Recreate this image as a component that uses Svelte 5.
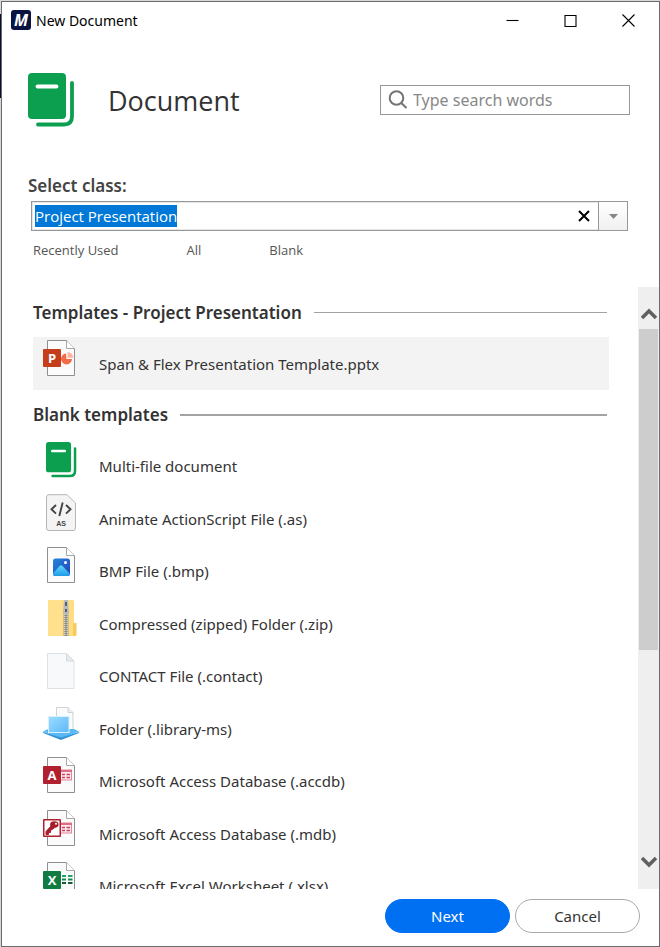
<script>
  import { onMount } from 'svelte';

  let classInput;
  let classValue = $state('Project Presentation');
  let selected = $state('Span & Flex Presentation Template.pptx');

  const templates = [{ icon: 'pptx', name: 'Span & Flex Presentation Template.pptx' }];
  const blanks = [
    { icon: 'book', name: 'Multi-file document' },
    { icon: 'as', name: 'Animate ActionScript File (.as)' },
    { icon: 'bmp', name: 'BMP File (.bmp)' },
    { icon: 'zip', name: 'Compressed (zipped) Folder (.zip)' },
    { icon: 'contact', name: 'CONTACT File (.contact)' },
    { icon: 'library', name: 'Folder (.library-ms)' },
    { icon: 'accdb', name: 'Microsoft Access Database (.accdb)' },
    { icon: 'mdb', name: 'Microsoft Access Database (.mdb)' },
    { icon: 'xlsx', name: 'Microsoft Excel Worksheet (.xlsx)' }
  ];

  onMount(() => {
    classInput.focus();
    classInput.select();
  });

  function clearClass() {
    classValue = '';
    classInput.focus();
  }
</script>

{#snippet book()}
  <rect x="0" y="0" width="38" height="46" rx="4" fill="#0b9f4f" />
  <path d="M9.500 13.500H28.500" stroke="#fff" stroke-width="3.800" stroke-linecap="round" />
  <path d="M44 10V43.500Q44 51.500 36 51.500H10" fill="none" stroke="#0b9f4f" stroke-width="3.800" stroke-linecap="round" />
{/snippet}

{#snippet page()}
  <path d="M5.500 1.500H24.500L32.500 9.500V36.500H5.500Z" fill="#fbfbfb" stroke="#8f8f8f" />
  <path d="M24.500 1.500V9.500H32.500" fill="#fff" stroke="#a8a8a8" />
{/snippet}

{#snippet fileIcon(kind)}
  <svg class="icon" viewBox="0 0 38 38" aria-hidden="true">
    {#if kind === 'book'}
      <g transform="translate(4 1) scale(0.66)">{@render book()}</g>
    {:else if kind === 'as'}
      <path d="M7 .7H25L33.500 9V34Q33.500 36.500 31 36.500H7Q4.500 36.500 4.500 34V3.200Q4.500 .7 7 .7Z" fill="#f4f4f4" stroke="#b5b5b5" />
      <path d="M14 11L9.500 15.300L14 19.600M24 11L28.500 15.300L24 19.600M20.700 8.500L17.300 22" fill="none" stroke="#444" stroke-width="1.900" />
      <text x="19" y="32" text-anchor="middle" class="tiny">AS</text>
    {:else if kind === 'contact'}
      <path d="M5.500 2.500H24.500L32 10V37.500H5.500Z" fill="#f8f9fa" stroke="#dfe2e5" />
      <path d="M24.500 2.500V10H32Z" fill="#e8ebed" stroke="#d5d8dc" />
    {:else if kind === 'zip'}
      <path d="M6 1H30.500Q32 1 32 2.500V24H34V35.500Q34 37 32.500 37H6Z" fill="#ffdd80" />
      <path d="M6 1H20V37H6Z" fill="#ffe08c" />
      <path d="M31 37V26Q31 24 33 24H34.500V35.500Q34.500 37 33 37Z" fill="#f6ca5c" />
      <path d="M24 14V37" stroke="#a7a394" stroke-width="5" />
      <path d="M24 15V37" stroke="#ece9db" stroke-width="3.500" stroke-dasharray="1 1" />
      <path d="M24 15V37" stroke="#77756b" stroke-width="1" />
      <path d="M22 1H26L27 14Q24 17 21 14Z" fill="#b7bac0" />
      <path d="M24 3V7M24 10V13" stroke="#5d6167" stroke-width="2" />
    {:else if kind === 'library'}
      <path d="M14.500 3.500H26L31 8.500V29H14.500Z" fill="#fafbfc" stroke="#cfd3d7" />
      <path d="M26 3.500V8.500H31" fill="#eceff1" stroke="#cfd3d7" />
      <path d="M1 27.500L6 25H32L37 27.500L19 34.500Z" fill="#5ab9f3" />
      <path d="M1 28L19 33.500L37 28V29L19 36L1 29Z" fill="#2f93d8" />
      <rect x="6.500" y="12.500" width="20.500" height="16" fill="url(#sky)" stroke="#dceffc" />
    {:else}
      {@render page()}
      {#if kind === 'bmp'}
        <rect x="11" y="12.500" width="17" height="17.500" rx="2.500" fill="url(#photo)" />
        <path d="M11 27.500L17.500 20Q19 18.500 20.500 20L28 28Q28 30 25.500 30H13.500Q11 30 11 27.500Z" fill="url(#hill)" />
        <circle cx="23.500" cy="16.500" r="1.500" fill="#fff" />
      {:else if kind === 'pptx'}
        <path d="M24 14.500A5.500 5.500 0 1 0 30 20H24.500Z" fill="#f26b48" />
        <path d="M25.500 13V18.800H31.300A5.800 5.800 0 0 0 25.500 13Z" fill="#ffb3a0" />
        <rect x="1" y="10" width="18" height="18" rx="1" fill="#c43e1c" />
        <text x="10" y="24" text-anchor="middle" class="letter">P</text>
      {:else if kind === 'xlsx'}
        <path d="M20 15H24M26 15H30.500" stroke="#21a366" stroke-width="2" />
        <path d="M20 18.500H24M26 18.500H30.500" stroke="#138a50" stroke-width="2" />
        <path d="M20 22H24M26 22H30.500" stroke="#185c37" stroke-width="2" />
        <rect x="1" y="10" width="18" height="18" rx="1" fill="#107c41" />
        <text x="10" y="24" text-anchor="middle" class="letter">X</text>
      {:else}
        <rect x="18" y="14" width="11.500" height="10" fill="#fde9ee" stroke="#e88399" />
        <path d="M18 15H30" stroke="#dc6d86" stroke-width="2" />
        <path d="M20 18.500H23M24.500 18.500H28M20 21.500H23M24.500 21.500H28" stroke="#c8435d" stroke-width="1.300" />
        <rect x="1" y="10" width="18" height="18" rx="1" fill="#b0202f" />
        {#if kind === 'accdb'}
          <text x="10" y="24" text-anchor="middle" class="letter">A</text>
        {:else}
          <rect x="2.500" y="11.500" width="15" height="15" fill="#fff" />
          <ellipse cx="12.300" cy="15.500" rx="4.200" ry="3.300" fill="#a81d2c" />
          <path d="M10 16L4 22.500V25.500H6.500V23.500H8.500V21.500L13.500 18" fill="#a81d2c" stroke="#a81d2c" />
          <circle cx="14" cy="14.800" r="1" fill="#fff" />
        {/if}
      {/if}
    {/if}
  </svg>
{/snippet}

{#snippet rows(items)}
  <ul>
    {#each items as item}
      <li>
        <button type="button" class="row" class:selected={selected === item.name} onclick={() => (selected = item.name)}>
          {@render fileIcon(item.icon)}
          <span>{item.name}</span>
        </button>
      </li>
    {/each}
  </ul>
{/snippet}

<svg class="defs" width="0" height="0" aria-hidden="true">
  <defs>
    <linearGradient id="sky" x1="0" y1="0" x2="1" y2="1"><stop stop-color="#9bdcff" /><stop offset="1" stop-color="#5db9f8" /></linearGradient>
    <linearGradient id="photo" x1="0" y1="0" x2="1" y2="1"><stop stop-color="#1f86dc" /><stop offset="1" stop-color="#2b3fb5" /></linearGradient>
    <linearGradient id="hill" x1="0" y1="0" x2="0" y2="1"><stop stop-color="#5fd8fa" /><stop offset="1" stop-color="#1e9ae8" /></linearGradient>
  </defs>
</svg>

<div class="desktop">
  <main class="window">
    <div class="titlebar">
      <svg class="app" viewBox="0 0 20 20" aria-hidden="true">
        <rect width="20" height="20" rx="3" fill="#0a1440" />
        <text x="10" y="15.500" text-anchor="middle" class="mark">M</text>
      </svg>
      <span class="caption">New Document</span>
      <button type="button" class="win" aria-label="Minimize">
        <svg viewBox="0 0 13 13"><path d="M.5 6.500H12.500" /></svg>
      </button>
      <button type="button" class="win" aria-label="Maximize">
        <svg viewBox="0 0 13 13"><path d="M1 1.500H12V12.500H1Z" /></svg>
      </button>
      <button type="button" class="win" aria-label="Close">
        <svg viewBox="0 0 13 13"><path d="M.5 .5L12.500 12.500M12.500 .5L.5 12.500" /></svg>
      </button>
    </div>

    <header>
      <svg class="hero" viewBox="0 0 48 54" aria-hidden="true">{@render book()}</svg>
      <h1>Document</h1>
      <label class="search">
        <svg viewBox="0 0 20 20" aria-hidden="true"><circle cx="8.500" cy="8" r="6.800" /><path d="M13.300 13L18.500 18" /></svg>
        <input type="search" placeholder="Type search words" aria-label="Search" />
      </label>
    </header>

    <section class="class-picker">
      <label for="class">Select class:</label>
      <div class="combo">
        <input id="class" type="text" autocomplete="off" spellcheck="false" bind:this={classInput} bind:value={classValue} />
        <button type="button" class="clear" aria-label="Clear" onclick={clearClass}>
          <svg viewBox="0 0 12 12"><path d="M1 1L11 11M11 1L1 11" /></svg>
        </button>
        <button type="button" class="drop" aria-label="Show classes">
          <svg viewBox="0 0 9 5"><path d="M0 0H9L4.500 5Z" /></svg>
        </button>
      </div>
      <nav>
        <a href="#recent">Recently Used</a>
        <a href="#all">All</a>
        <a href="#blank">Blank</a>
      </nav>
    </section>

    <div class="browser">
      <div class="list">
        <h2>Templates - Project Presentation</h2>
        {@render rows(templates)}
        <h2 class="strong">Blank templates</h2>
        {@render rows(blanks)}
      </div>
      <div class="scrollbar">
        <button type="button" aria-label="Scroll up">
          <svg viewBox="0 0 16 12"><path d="M1 10L8 3L15 10" /></svg>
        </button>
        <div class="track"><div class="thumb"></div></div>
        <button type="button" aria-label="Scroll down">
          <svg viewBox="0 0 16 12"><path d="M1 2L8 9L15 2" /></svg>
        </button>
      </div>
    </div>

    <footer>
      <button type="button" class="primary">Next</button>
      <button type="button">Cancel</button>
    </footer>
  </main>
</div>

<style>
  :global(body) {
    margin: 0;
  }
  * {
    box-sizing: border-box;
  }
  button,
  input {
    font: inherit;
    color: inherit;
    margin: 0;
    padding: 0;
    border: 0;
    background: none;
    outline: none;
  }
  svg {
    display: block;
    flex: none;
  }
  .defs {
    position: absolute;
  }
  .desktop {
    height: 100vh;
    padding: 1px 0 0 1px;
    background: linear-gradient(#d9d9d9 14px, #060c33 14px, #060c33 98px, #d4d6da 98px);
    font-family: 'Noto Sans', 'Open Sans', sans-serif;
    font-size: 15px;
    color: #333;
  }
  .window {
    display: flex;
    flex-direction: column;
    height: 100%;
    border: 1px solid #6c6c6c;
    background: #fff;
  }
  .titlebar {
    display: flex;
    align-items: center;
    flex: none;
    height: 36px;
    padding: 0 2px 0 9px;
    color: #000;
  }
  .app {
    width: 20px;
    height: 20px;
  }
  .mark {
    font: italic 700 16px 'Open Sans', sans-serif;
    fill: #fff;
  }
  .caption {
    flex: 1;
    padding-left: 5px;
    font-size: 14px;
  }
  .win {
    display: grid;
    place-items: center;
    width: 58px;
    height: 36px;
  }
  .win svg {
    width: 13px;
    height: 13px;
    fill: none;
    stroke: #000;
    stroke-width: 1.1;
  }
  header {
    display: flex;
    align-items: center;
    flex: none;
    height: 124px;
    padding: 0 29px 0 26px;
  }
  .hero {
    width: 48px;
    height: 54px;
  }
  h1 {
    flex: 1;
    margin: 0;
    padding-left: 32px;
    font-family: 'Open Sans', sans-serif;
    font-size: 27px;
    font-weight: 400;
  }
  .search {
    display: flex;
    align-items: center;
    gap: 5px;
    width: 250px;
    height: 30px;
    padding: 0 7px;
    border: 1px solid #989898;
  }
  .search svg {
    width: 20px;
    height: 20px;
    fill: none;
    stroke: #737478;
    stroke-width: 2;
  }
  .search input {
    flex: 1;
    min-width: 0;
    font-size: 16px;
  }
  .search input::placeholder {
    color: #888;
    opacity: 1;
  }
  .class-picker {
    flex: none;
    height: 125px;
    padding: 11px 31px 0 26px;
  }
  .class-picker label {
    display: block;
    height: 28px;
    line-height: 26px;
    font-size: 17px;
    font-weight: 600;
    color: #444;
  }
  .combo {
    display: flex;
    align-items: center;
    height: 30px;
    margin-left: 3px;
    border: 1px solid #989898;
    box-shadow: inset 0 0 0 1px #e6e6e6;
  }
  .combo input {
    flex: 1;
    min-width: 0;
    height: 22px;
    line-height: 22px;
    padding-left: 3px;
    font-family: 'Open Sans', sans-serif;
  }
  .combo input::selection {
    background: #0078d7;
    color: #fff;
  }
  .clear,
  .drop {
    display: grid;
    place-items: center;
    width: 29px;
    height: 28px;
  }
  .clear svg {
    width: 12px;
    height: 12px;
    fill: none;
    stroke: #000;
    stroke-width: 2;
  }
  .drop {
    border-left: 1px solid #989898;
    background: linear-gradient(#fff, #f0f0f0);
  }
  .drop svg {
    width: 9px;
    height: 5px;
    fill: #858585;
  }
  nav {
    display: flex;
    gap: 68px;
    padding: 9px 0 0 5px;
    font-family: 'Open Sans', sans-serif;
    font-size: 13px;
    line-height: 20px;
  }
  nav a {
    color: #555;
    text-decoration: none;
  }
  .browser {
    display: flex;
    flex: 1;
    min-height: 0;
  }
  .list {
    flex: 1;
    min-width: 0;
    overflow-y: auto;
    scrollbar-width: none;
    padding: 1px 29px 0 31px;
  }
  h2 {
    display: flex;
    align-items: center;
    gap: 12px;
    height: 49px;
    margin: 0;
    padding-right: 2px;
    font-size: 17px;
    font-weight: 600;
  }
  h2::after {
    content: '';
    flex: 1;
    height: 1px;
    background: #a3a3a3;
  }
  h2.strong::after {
    height: 2px;
  }
  ul {
    display: grid;
    grid-auto-rows: 53px 52px;
    margin: 0;
    padding: 0;
    list-style: none;
  }
  li {
    display: flex;
  }
  .row {
    display: flex;
    flex: 1;
    gap: 19px;
    padding: 2px 9px 0;
    text-align: left;
  }
  .row span {
    padding-top: 14px;
    line-height: 22px;
  }
  .row.selected {
    background: #f3f3f3;
  }
  .icon {
    width: 38px;
    height: 38px;
  }
  .letter {
    font: 700 13px 'Open Sans', sans-serif;
    fill: #fff;
  }
  .tiny {
    font: 700 7px 'Liberation Sans', sans-serif;
    fill: #444;
  }
  .scrollbar {
    display: flex;
    flex-direction: column;
    flex: none;
    width: 21px;
    background: #efefef;
  }
  .scrollbar button {
    display: grid;
    place-items: end center;
    height: 42px;
    padding-bottom: 9px;
  }
  .scrollbar button:last-child {
    place-items: start center;
    padding: 9px 0 0;
  }
  .scrollbar svg {
    width: 16px;
    height: 12px;
    fill: none;
    stroke: #606060;
    stroke-width: 3.5;
  }
  .track {
    flex: 1;
    padding: 0 1px;
  }
  .thumb {
    height: 62%;
    background: #cdcdcd;
  }
  footer {
    display: flex;
    justify-content: flex-end;
    gap: 5px;
    flex: none;
    padding: 10px 19px 13px;
  }
  footer button {
    width: 125px;
    height: 34px;
    border: 1px solid #aaa;
    border-radius: 17px;
  }
  footer .primary {
    border-color: #0070f3;
    background: #0070f3;
    color: #fff;
  }
</style>
